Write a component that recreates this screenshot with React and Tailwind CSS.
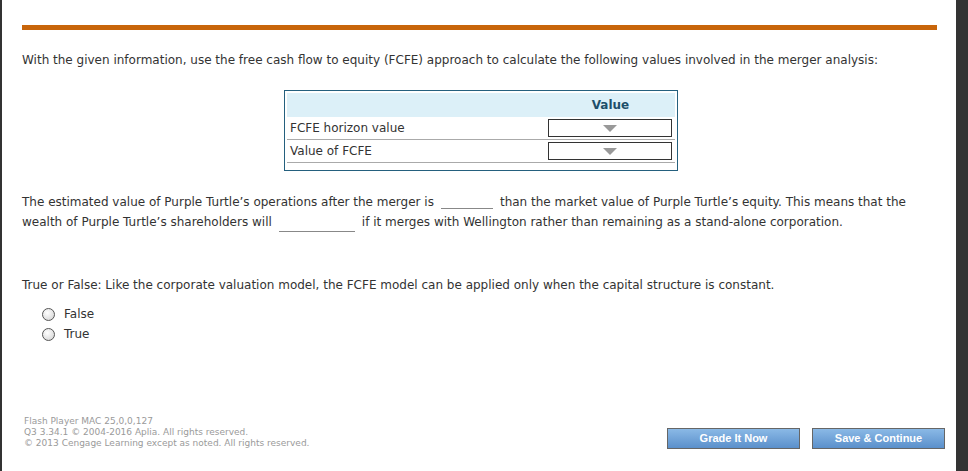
import React from "react";

const font = { fontFamily: "Verdana, 'DejaVu Sans', sans-serif" };

function Select() {
    return (
        <div className="w-[124px] h-[18px] border border-[#333] bg-white flex items-center justify-center">
            <svg width="14" height="7" viewBox="0 0 14 7">
                <polygon points="0,0 14,0 7,7" fill="#999" />
            </svg>
        </div>
    );
}

function Radio({ label }) {
    return (
        <div className="flex items-center h-[20px]">
            <span className="w-[13px] h-[13px] rounded-full border border-[#555] bg-[radial-gradient(circle_at_40%_35%,#ffffff,#d0d0d0)] mr-[9px]"></span>
            <span>{label}</span>
        </div>
    );
}

function Blank({ w, drop }) {
    return <span className={`${w} ${drop} border-b border-[#888] mx-[7px]`}></span>;
}

export default function App() {
    return (
        <div className="w-full h-[471px] flex bg-white overflow-hidden">
            <div className="w-[2px] bg-[#333]"></div>
            <div className="flex-1 flex flex-col pl-[20px] pr-[19px] text-[12px] text-[#333]" style={font}>
                <div className="h-[5px] bg-[#c8650a] mt-[25px]"></div>

                <p className="mt-[23px] leading-[15px]">
                    With the given information, use the free cash flow to equity (FCFE) approach to calculate the following values involved in the merger analysis:
                </p>

                <div className="mt-[22px] ml-[262px] w-[394px] border border-[#24607e] p-[2px]">
                    <div className="h-[24px] bg-[#dcf0f8] flex items-center">
                        <div className="flex-1"></div>
                        <div className="w-[127px] text-center font-bold text-[#1d4f6a] pr-[2px]">Value</div>
                    </div>
                    <div className="h-[23px] flex items-center border-b border-[#aaa] px-[3px]">
                        <div className="flex-1">FCFE horizon value</div>
                        <Select />
                    </div>
                    <div className="h-[23px] flex items-center border-b border-[#aaa] px-[3px]">
                        <div className="flex-1">Value of FCFE</div>
                        <Select />
                    </div>
                    <div className="h-[5px]"></div>
                </div>

                <div className="mt-[21px] leading-[20px]">
                    <div className="flex items-center h-[20px]">
                        <span>The estimated value of Purple Turtle’s operations after the merger is</span>
                        <Blank w="w-[52px]" drop="self-end mb-[3px]" />
                        <span>than the market value of Purple Turtle’s equity. This means that the</span>
                    </div>
                    <div className="flex items-center h-[20px]">
                        <span>wealth of Purple Turtle’s shareholders will</span>
                        <Blank w="w-[76px]" drop="self-end mb-[0px]" />
                        <span>if it merges with Wellington rather than remaining as a stand-alone corporation.</span>
                    </div>
                </div>

                <p className="mt-[46px] leading-[15px]">
                    True or False: Like the corporate valuation model, the FCFE model can be applied only when the capital structure is constant.
                </p>

                <div className="mt-[11px] ml-[20px]">
                    <Radio label="False" />
                    <Radio label="True" />
                </div>

                <div className="flex-1"></div>

                <div className="flex items-end justify-between mb-[22px]">
                    <div className="text-[9px] leading-[11px] text-[#9a9a9a] pl-[2px]">
                        <div>Flash Player MAC 25,0,0,127</div>
                        <div>Q3 3.34.1 © 2004-2016 Aplia. All rights reserved.</div>
                        <div>© 2013 Cengage Learning except as noted. All rights reserved.</div>
                    </div>
                    <div className="flex gap-[12px] mr-[-8px] mb-[0px]">
                        <button className="w-[133px] h-[21px] border border-[#666] bg-gradient-to-b from-[#8ab9e6] to-[#5b90cb] text-white font-bold text-[11px]" style={{ fontFamily: "'Liberation Sans', Arial, sans-serif" }}>
                            Grade It Now
                        </button>
                        <button className="w-[133px] h-[21px] border border-[#666] bg-gradient-to-b from-[#8ab9e6] to-[#5b90cb] text-white font-bold text-[11px]" style={{ fontFamily: "'Liberation Sans', Arial, sans-serif" }}>
                            Save &amp; Continue
                        </button>
                    </div>
                </div>
            </div>
            <div className="w-[12px] bg-[#333]"></div>
        </div>
    );
}
